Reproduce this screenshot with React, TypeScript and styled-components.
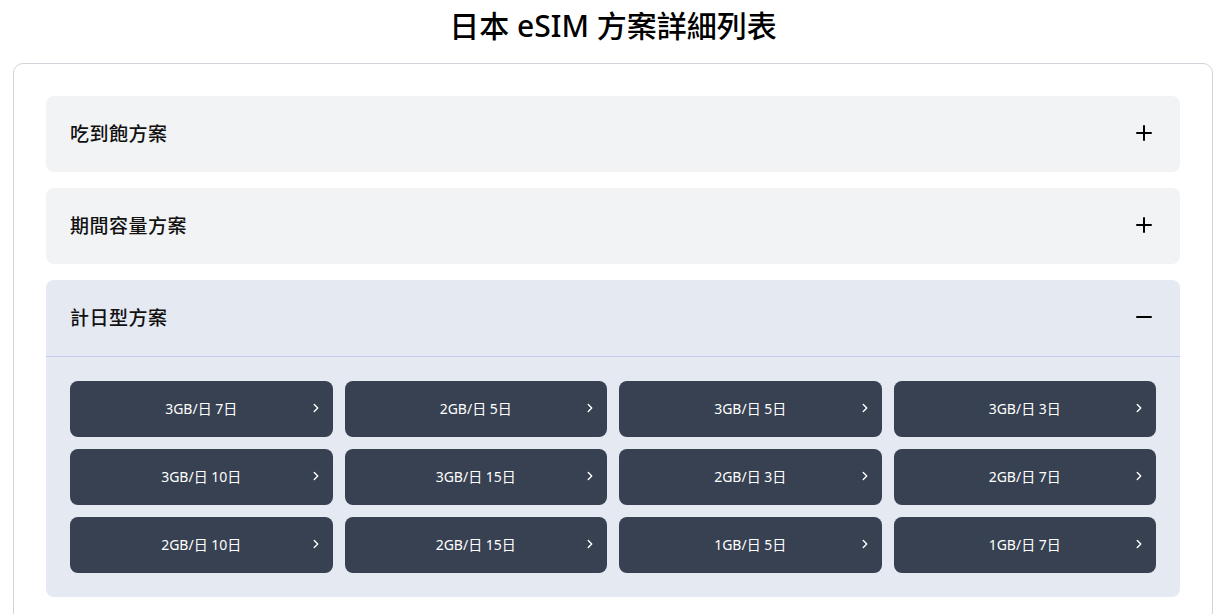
import React, { useState } from "react";
import styled, { createGlobalStyle } from "styled-components";
import { Plus, Minus, ChevronRight } from "lucide-react";

const GlobalStyle = createGlobalStyle`
  html, body { margin: 0; padding: 0; background: #ffffff; }
  body {
    font-family: "Noto Sans", "Noto Sans CJK TC", sans-serif;
    color: #111111;
  }
  * { box-sizing: border-box; }
`;

const Page = styled.div`
  padding: 8px 13px 0;
`;

const Title = styled.h1`
  margin: 0 0 19px;
  text-align: center;
  font-size: 30px;
  line-height: 36px;
  font-weight: 500;
  color: #000;
`;

const Card = styled.div`
  max-width: 1200px;
  margin: 0 auto;
  border: 1px solid #d1d5db;
  border-radius: 10px;
  padding: 32px;
  display: flex;
  flex-direction: column;
  gap: 16px;
`;

const Panel = styled.section<{ $open: boolean }>`
  background: ${(p) => (p.$open ? "#e5e9f2" : "#f2f3f5")};
  border-radius: 8px;
  overflow: hidden;
`;

const Header = styled.button<{ $open: boolean }>`
  all: unset;
  box-sizing: border-box;
  width: 100%;
  height: ${(p) => (p.$open ? "77px" : "76px")};
  padding: 0 24px 2px;
  display: flex;
  align-items: center;
  justify-content: space-between;
  cursor: pointer;
  border-bottom: ${(p) => (p.$open ? "1px solid #c3cbef" : "none")};
`;

const HeaderText = styled.span`
  font-size: 19px;
  font-weight: 500;
  color: #111;
  letter-spacing: 0.5px;
`;

const Grid = styled.div`
  padding: 24px;
  display: grid;
  grid-template-columns: repeat(4, 1fr);
  gap: 12px;
`;

const PlanButton = styled.button`
  all: unset;
  box-sizing: border-box;
  height: 56px;
  background: #374151;
  border-radius: 8px;
  color: #fff;
  font-size: 14px;
  display: grid;
  grid-template-columns: 1fr auto 1fr;
  align-items: center;
  padding: 0 10px 2px;
  cursor: pointer;
`;

const PlanLabel = styled.span`
  grid-column: 2;
`;

const Chevron = styled.span`
  grid-column: 3;
  justify-self: end;
  display: flex;
`;

const sections = [
  { title: "吃到飽方案", plans: [] as string[] },
  { title: "期間容量方案", plans: [] as string[] },
  {
    title: "計日型方案",
    plans: [
      "3GB/日 7日",
      "2GB/日 5日",
      "3GB/日 5日",
      "3GB/日 3日",
      "3GB/日 10日",
      "3GB/日 15日",
      "2GB/日 3日",
      "2GB/日 7日",
      "2GB/日 10日",
      "2GB/日 15日",
      "1GB/日 5日",
      "1GB/日 7日",
    ],
  },
];

export default function App() {
  const [open, setOpen] = useState<number | null>(2);
  return (
    <>
      <GlobalStyle />
      <Page>
        <Title>日本 eSIM 方案詳細列表</Title>
        <Card>
          {sections.map((s, i) => {
            const isOpen = open === i;
            return (
              <Panel key={s.title} $open={isOpen}>
                <Header $open={isOpen} onClick={() => setOpen(isOpen ? null : i)}>
                  <HeaderText>{s.title}</HeaderText>
                  {isOpen ? <Minus size={24} strokeWidth={2} color="#000" /> : <Plus size={24} strokeWidth={2} color="#000" />}
                </Header>
                {isOpen && (
                  <Grid>
                    {s.plans.map((p) => (
                      <PlanButton key={p}>
                        <PlanLabel>{p}</PlanLabel>
                        <Chevron>
                          <ChevronRight size={14} strokeWidth={2.4} />
                        </Chevron>
                      </PlanButton>
                    ))}
                  </Grid>
                )}
              </Panel>
            );
          })}
        </Card>
      </Page>
    </>
  );
}
